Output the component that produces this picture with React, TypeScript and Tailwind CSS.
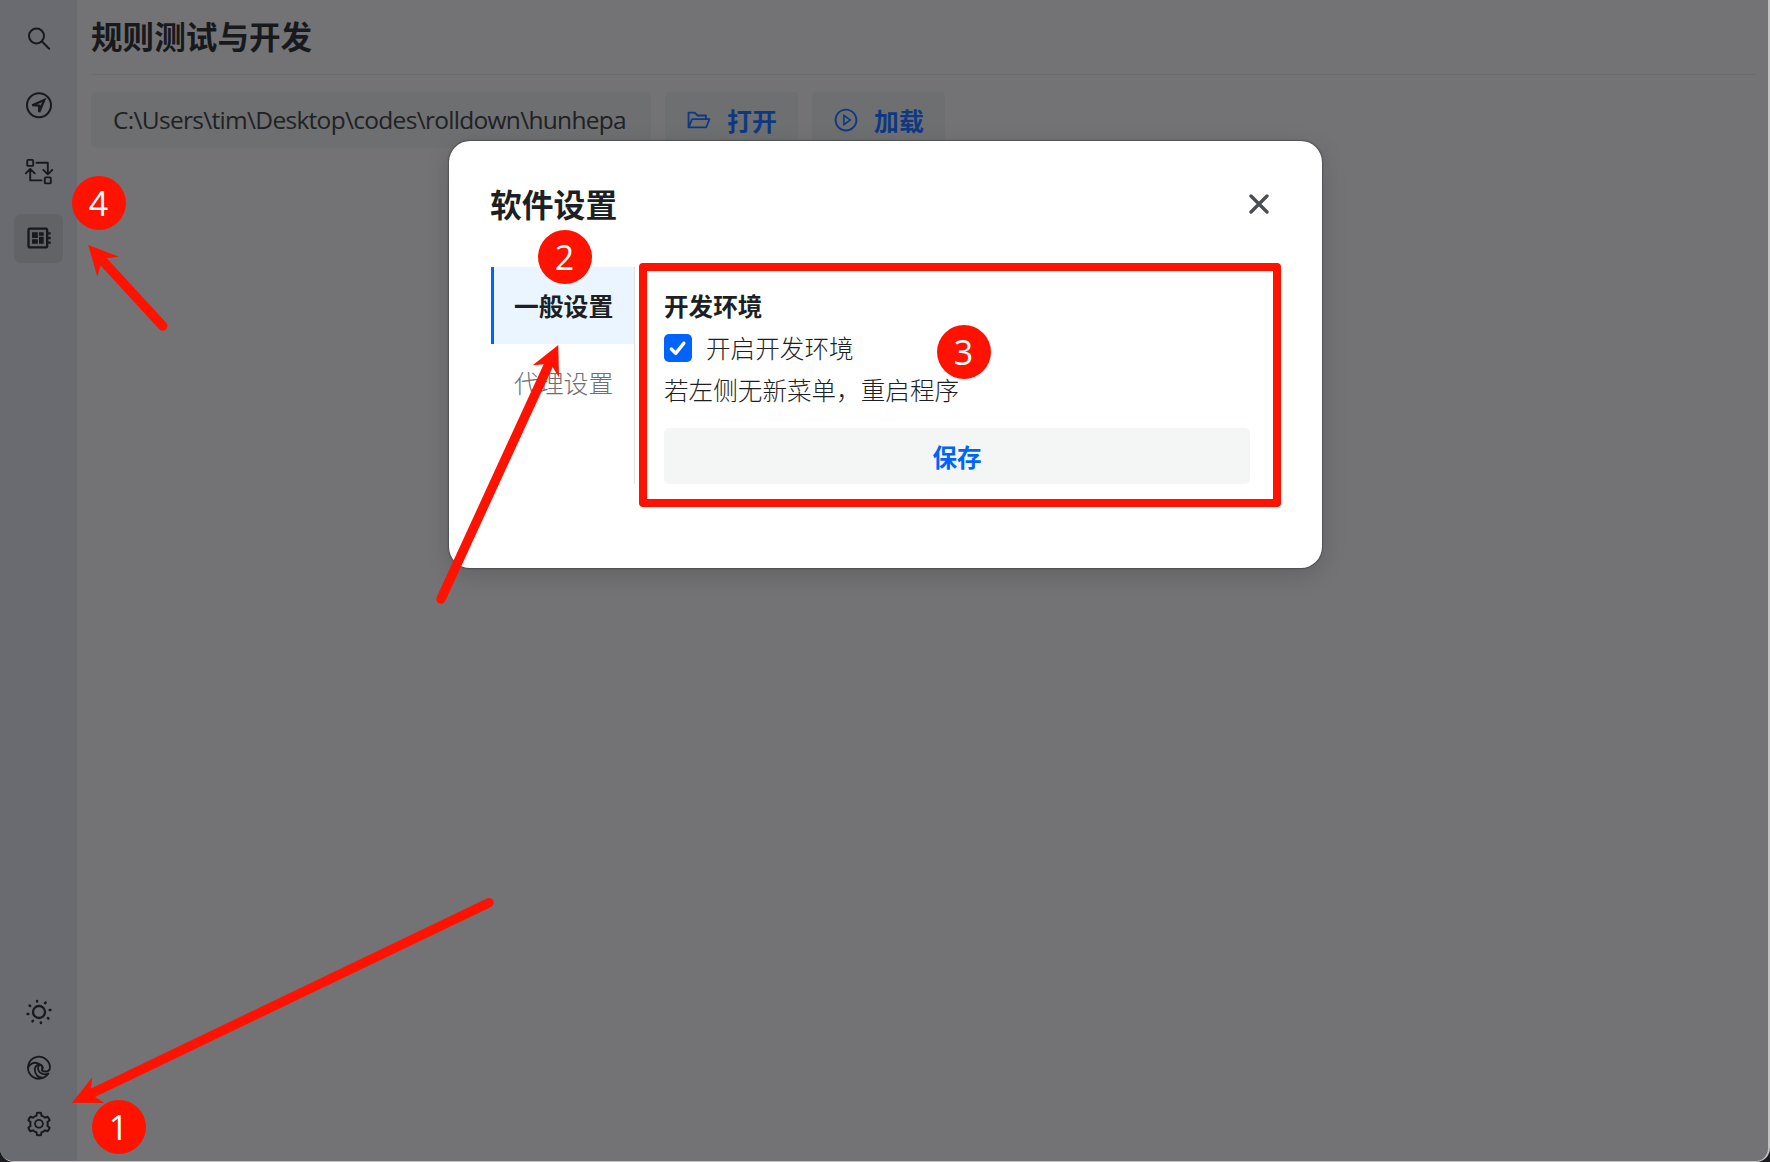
import type { ReactNode } from 'react';
import { AiOutlineFolderOpen, AiOutlinePlayCircle, AiOutlineSetting } from 'react-icons/ai';
import { MdOutlineDeveloperBoard } from 'react-icons/md';

const stroke = {
  fill: 'none',
  stroke: 'currentColor',
  strokeWidth: 2,
  strokeLinecap: 'round' as const,
  strokeLinejoin: 'round' as const,
};

function SearchIcon() {
  return (
    <svg className="size-7" viewBox="0 0 28 28" {...stroke}>
      <circle cx="11.5" cy="11" r="7.5" />
      <path d="M17 16.5l7.2 7.2" />
    </svg>
  );
}

function NavigateIcon() {
  return (
    <svg className="size-7" viewBox="0 0 28 28" {...stroke}>
      <circle cx="14" cy="14.3" r="12" />
      <path d="M7.3 14.2L19.3 9l-5.1 12v-6.5z" strokeWidth="2.3" strokeLinejoin="miter" />
    </svg>
  );
}

function FlowIcon() {
  return (
    <svg className="size-7" viewBox="0 0 28 28" {...stroke} strokeWidth="1.9">
      <g transform="translate(0 -0.8)">
        <rect x="2.2" y="2.7" width="6" height="6" rx="1" />
        <rect x="19.8" y="20.2" width="6" height="6" rx="1" />
        <path d="M11.5 5.5h11.3v11.3M18.3 12.6l4.5 4.5 4.5-4.5M16.5 23.2H5.2V11.8M.8 16.2l4.4-4.5 4.5 4.5" />
      </g>
    </svg>
  );
}

function SunIcon() {
  return (
    <svg className="size-7" viewBox="0 0 28 28" {...stroke}>
      <circle cx="14" cy="14" r="6" strokeWidth="2.3" />
      <g strokeWidth="2.5">
        <path d="M12.1 2.9v.6M20.5 4.6l-.4.5M25.4 12.1h-.7M23.4 20.5l-.5-.4M15.9 25.1v-.6M7.5 23.3l.4-.5M2.6 15.9h.7M4.6 7.5l.5.4" />
      </g>
    </svg>
  );
}

function EdgeIcon() {
  return (
    <svg className="size-7" viewBox="0 0 28 28" {...stroke} strokeWidth="1.8">
      <path d="M23.3 19.6A11 11 0 1 1 25 13.6c-.2 2.7-2.4 4-5 3.9-2.6-.1-3.6-1-2.8-2.1 1-1.5.6-3.4-1-4.2C12.6 9.7 9.8 12 9.8 15.6c0 5 3.7 8.8 8.8 8" />
      <path d="M3.2 13.4C4.8 9.5 9 7.8 13 9.3c3.4 1.2 4.8 3.5 4.2 6.1" />
      <path d="M14 11.6c-1.8 1.9-1.2 5.2 1.3 7.1 2.5 1.8 5.5 1.9 8 .9" />
    </svg>
  );
}

function NavButton({ active, children }: { active?: boolean; children: ReactNode }) {
  return (
    <button
      className={
        active
          ? 'flex size-[49px] items-center justify-center rounded-[7px] bg-[#626366] pb-px'
          : 'flex size-[49px] items-center justify-center rounded-[7px]'
      }
    >
      {children}
    </button>
  );
}

function Sidebar() {
  return (
    <aside className="flex w-[77px] shrink-0 flex-col items-center justify-between bg-[#6a6b70] pt-[14px] pb-[13px] text-[#18191d]">
      <div className="flex flex-col gap-[17.7px]">
        <NavButton><SearchIcon /></NavButton>
        <NavButton><NavigateIcon /></NavButton>
        <NavButton><FlowIcon /></NavButton>
        <NavButton active><MdOutlineDeveloperBoard className="size-7" /></NavButton>
      </div>
      <div className="flex flex-col gap-[7px]">
        <NavButton><SunIcon /></NavButton>
        <NavButton><EdgeIcon /></NavButton>
        <NavButton><AiOutlineSetting className="size-7" /></NavButton>
      </div>
    </aside>
  );
}

function ToolButton({ icon, label }: { icon: ReactNode; label: string }) {
  return (
    <button className="flex h-14 w-[133px] items-center gap-[15px] rounded-[5px] bg-[#6e6f70] pl-[21px] font-bold text-[#0e3982]">
      {icon}
      <span className="pb-px text-[24.9px]">{label}</span>
    </button>
  );
}

function SettingsDialog() {
  return (
    <div
      role="dialog"
      className="absolute top-[141px] left-[449px] flex h-[427px] w-[873px] flex-col rounded-[21px] bg-white pr-[41px] pl-[42px] text-[#1c1f23] shadow-[0_0_2px_rgba(0,0,0,0.8),0_7px_24px_rgba(0,0,0,0.15)]"
    >
      <header className="flex h-[126px] items-start justify-between pt-[39px]">
        <h2 className="-ml-px text-[31.8px] leading-[46px] font-bold">软件设置</h2>
        <button className="mt-[14px] mr-3 text-[#4b4e51]">
          <svg className="size-5" viewBox="0 0 20 20" {...stroke} strokeWidth="3.4">
            <path d="M2 2l16 16M18 2l-16 16" />
          </svg>
        </button>
      </header>
      <div className="flex">
        <nav className="flex h-[217px] w-36 shrink-0 flex-col border-r border-[#e0e1e3] text-[24.8px]">
          <button className="h-[77px] border-l-[3px] border-[#0064fa] bg-[#eaf5ff] pb-0.5 pl-5 text-left font-bold">
            一般设置
          </button>
          <button className="h-[77px] pb-0.5 pl-[23px] text-left font-light text-[#6d6f73]">代理设置</button>
        </nav>
        <section className="ml-[29px] flex w-[586px] flex-col pt-[17px] text-[24.6px] leading-[42px] font-light">
          <h3 className="font-bold">开发环境</h3>
          <label className="flex items-center gap-[14px]">
            <span className="mt-0.5 flex size-7 items-center justify-center rounded-[5px] bg-[#0064fa] text-white">
              <svg className="size-5" viewBox="0 0 20 20" {...stroke} strokeWidth="3.4">
                <path d="M3.4 11l4.3 4.4 8.1-10.2" />
              </svg>
            </span>
            开启开发环境
          </label>
          <p>若左侧无新菜单，重启程序</p>
          <button className="mt-[18px] h-14 rounded-[5px] bg-[#f4f6f6] pb-px font-bold text-[#0064fa]">保存</button>
        </section>
      </div>
    </div>
  );
}

function Annotations() {
  const badge =
    'absolute flex size-[54px] items-center justify-center rounded-full bg-[#ff1200] pr-px font-["Open_Sans","Noto_Sans",sans-serif] text-[34px] leading-none text-white';
  return (
    <>
      <div className="absolute top-[263px] left-[639px] h-[244px] w-[642px] rounded-[4px] border-8 border-[#ff1200]" />
      <svg className="absolute inset-0 h-full w-full" viewBox="0 0 1770 1162" fill="#ff1200" stroke="#ff1200">
        <g strokeWidth="9.4" strokeLinecap="round">
          <path d="M162.7 326L102 260" />
          <path d="M441 599L549 364" />
          <path d="M489 902.7L92 1093.2" />
        </g>
        <g stroke="none">
          <path d="M88.3 245L119 256.7l-11.7 1.6-6.6 6.7-3.4 11.7z" />
          <path d="M558.3 345l-25.6 20.3 11.3-1 8.7 3 6.3 10z" />
          <path d="M72 1102.7l20.3-25.4-1.3 11.4 4 8.3 9.3 6z" />
        </g>
      </svg>
      <div className={`${badge} top-[1100px] left-[92px]`}>1</div>
      <div className={`${badge} top-[230px] left-[538px]`}>2</div>
      <div className={`${badge} top-[325px] left-[937px]`}>3</div>
      <div className={`${badge} top-[176px] left-[72px]`}>4</div>
    </>
  );
}

export default function App() {
  return (
    <div className='relative h-[1162px] w-[1770px] overflow-hidden bg-[#1c1c20] font-["Noto_Sans_CJK_SC",sans-serif] text-[24.5px] leading-[42px]'>
      <div className="flex h-full overflow-hidden rounded-b-[14px] border-r-2 border-b border-[#c2c2c2] bg-[#737375]">
        <Sidebar />
        <main className="flex min-w-0 flex-1 flex-col pr-3 pl-[14px] text-[#18191d]">
          <h1 className="h-[75px] border-b border-[#6a6b6d] pt-3 text-[31.6px] leading-[46px] font-bold">
            规则测试与开发
          </h1>
          <div className="mt-[17px] flex gap-[14px]">
            <div className="flex h-14 w-[560px] items-center rounded-[5px] bg-[#6e6f70] px-[22px]">
              <span className='overflow-hidden font-["Open_Sans","Noto_Sans",sans-serif] tracking-[-0.7px] whitespace-nowrap text-[#202125]'>
                C:\Users\tim\Desktop\codes\rolldown\hunhepa
              </span>
            </div>
            <ToolButton icon={<AiOutlineFolderOpen className="size-[26px]" />} label="打开" />
            <ToolButton icon={<AiOutlinePlayCircle className="size-[26px]" />} label="加载" />
          </div>
        </main>
      </div>
      <SettingsDialog />
      <Annotations />
    </div>
  );
}
